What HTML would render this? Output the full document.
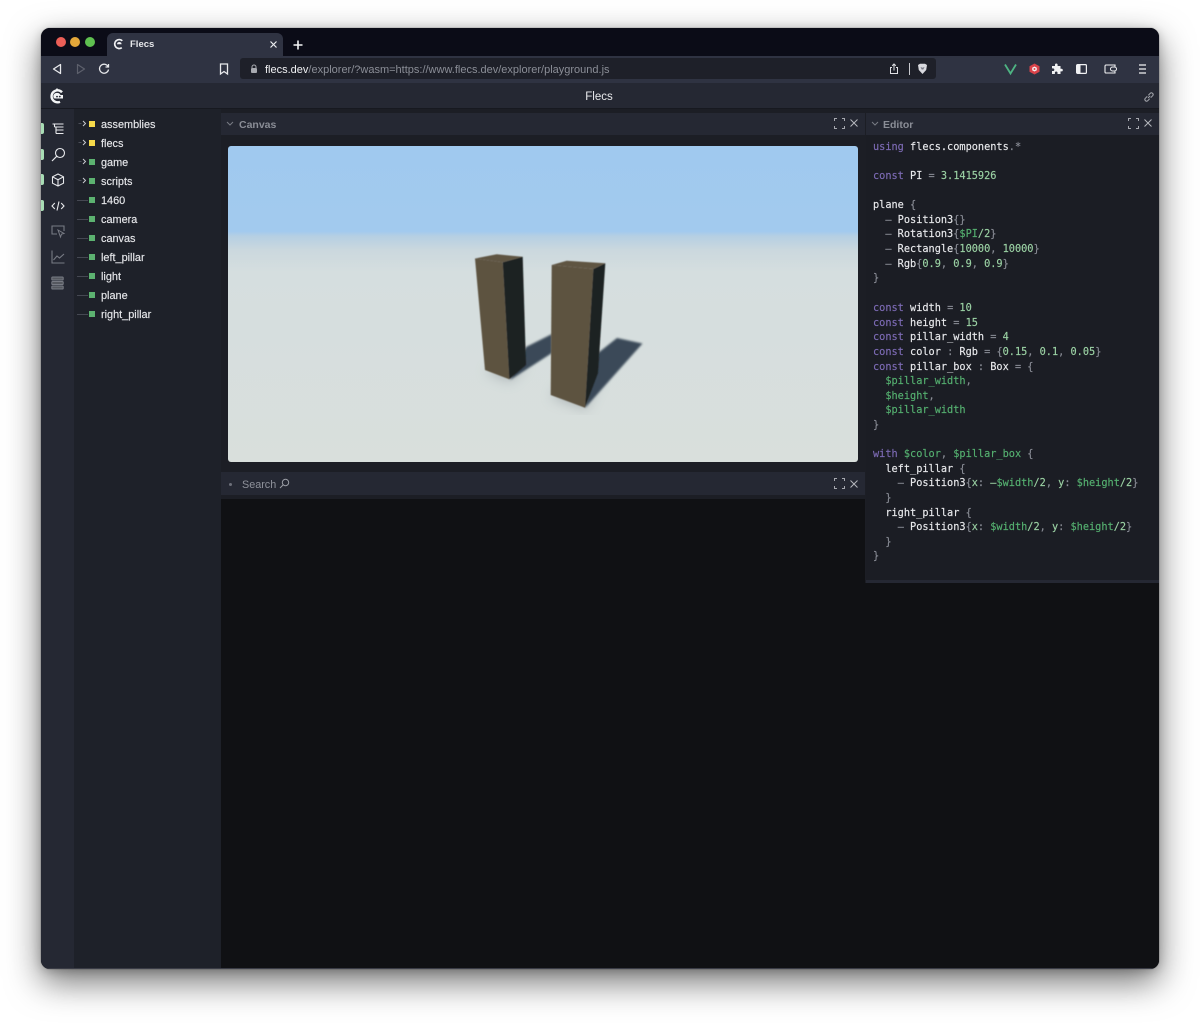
<!DOCTYPE html>
<html><head><meta charset="utf-8"><title>Flecs</title>
<style>
*{box-sizing:border-box}
html,body{margin:0;padding:0;width:1200px;height:1024px;background:#fff;overflow:hidden;font-family:"Liberation Sans",sans-serif}
#win{position:absolute;left:41px;top:28px;width:1118px;height:941px;border-radius:9px;overflow:hidden;background:#101114;box-shadow:0 0 1px rgba(0,0,0,.6),0 13px 34px rgba(0,0,0,.55),0 2px 10px rgba(0,0,0,.2)}
.a{position:absolute}
.t{position:absolute;white-space:pre;line-height:14px}
.tree{font-size:10.9px;color:#e6e7ea;left:60px;-webkit-text-stroke:.15px #e6e7ea}
.sq{position:absolute;left:48px;width:6px;height:6px;background:#5cb270}
.sq.y{background:#f5d94a}
.dash{position:absolute;left:36px;width:11px;height:1px;background:#454852}
.code{position:absolute;left:832px;font:10.25px/14px "DejaVu Sans Mono","Liberation Mono",monospace;color:#e8e9ec;white-space:pre;-webkit-text-stroke:.15px currentColor}
.k{color:#7d6bb5}.n{color:#9bd2a4}.v{color:#55b070}.p{color:#8a8d96}
.pip{position:absolute;left:0;width:3px;height:11px;background:#a8dcb4;border-radius:0 2px 2px 0}
svg{position:absolute;overflow:visible}
</style></head><body>
<div id="win">
<!-- tab bar -->
<div class="a" style="left:0;top:0;width:1118px;height:28px;background:#0b0c17"></div>
<div class="a" style="left:15px;top:9px;width:10px;height:10px;border-radius:50%;background:#ec5f57"></div>
<div class="a" style="left:29px;top:9px;width:10px;height:10px;border-radius:50%;background:#e4a83a"></div>
<div class="a" style="left:44px;top:9px;width:10px;height:10px;border-radius:50%;background:#5fc150"></div>
<div class="a" style="left:66px;top:5px;width:176px;height:23px;background:#2f3342;border-radius:6px 6px 0 0"></div>
<svg style="left:72px;top:10px" width="12" height="12" viewBox="0 0 12 12"><path d="M9.300 2.800A4.500 4.500 0 1 0 8.800 9.700" fill="none" stroke="#f1f2f4" stroke-width="1.700"/><path d="M4 6.300a2.300 2.300 0 0 1 4.600 0z" fill="#f1f2f4"/></svg>
<div class="t" style="left:89px;top:10px;font-size:9.500px;font-weight:bold;color:#e6e7ea">Flecs</div>
<svg style="left:229px;top:13px" width="7" height="7" viewBox="0 0 7 7"><path d="M.5.5l6 6M6.500.5l-6 6" stroke="#eceef0" stroke-width="1.200"/></svg>
<svg style="left:252px;top:12px" width="10" height="10" viewBox="0 0 10 10"><path d="M5 .5v9M.5 5h9" stroke="#f4f5f6" stroke-width="1.600"/></svg>
<!-- toolbar -->
<div class="a" style="left:0;top:28px;width:1118px;height:27px;background:#2f3342"></div>
<svg style="left:11px;top:35px" width="10" height="12" viewBox="0 0 10 12"><path d="M8.500 1.500v9L1.500 6z" fill="none" stroke="#e8e9ec" stroke-width="1.300" stroke-linejoin="round"/></svg>
<svg style="left:35px;top:35px" width="10" height="12" viewBox="0 0 10 12"><path d="M1.500 1.500v9L8.500 6z" fill="none" stroke="#5d606c" stroke-width="1.200" stroke-linejoin="round"/></svg>
<svg style="left:57px;top:35px" width="12" height="12" viewBox="0 0 12 12"><path d="M10 3.500A4.500 4.500 0 1 0 10.500 6.500M10.500 1v3H7.500" fill="none" stroke="#e8e9ec" stroke-width="1.300"/></svg>
<svg style="left:178px;top:35px" width="10" height="12" viewBox="0 0 10 12"><path d="M1.500 1h7v10L5 8.500 1.500 11z" fill="none" stroke="#e8e9ec" stroke-width="1.300"/></svg>
<div class="a" style="left:199px;top:30px;width:696px;height:21px;background:#1e2029;border-radius:3px"></div>
<svg style="left:209px;top:36px" width="8" height="10" viewBox="0 0 8 10"><path d="M2 4V3a2 2 0 0 1 4 0v1" fill="none" stroke="#a8aab0" stroke-width="1"/><rect x="1" y="4" width="6" height="5" rx="1" fill="#a8aab0"/></svg>
<div class="t" style="left:224px;top:35px;font-size:11px;color:#8b8e97"><span style="color:#f0f1f3">flecs.dev</span>/explorer/?wasm=https://www.flecs.dev/explorer/playground.js</div>
<svg style="left:848px;top:35px" width="10" height="12" viewBox="0 0 10 12"><path d="M3 4.500H1.500v6h7v-6H7M5 7.500V1M3.200 2.700 5 1l1.800 1.700" fill="none" stroke="#dfe0e4" stroke-width="1"/></svg>
<div class="a" style="left:868px;top:35px;width:1px;height:12px;background:#c8c9ce"></div>
<svg style="left:876px;top:35px" width="11" height="12" viewBox="0 0 11 12"><path d="M1 2 3 .8h5L10 2l-.8 5L5.500 11 1.800 7z" fill="#d8d9de"/><path d="M3.500 4l2 .8L7.500 4 6.300 6.500H4.700z" fill="#777985"/></svg>
<svg style="left:963px;top:35px" width="13" height="12" viewBox="0 0 13 12"><path d="M1 1.500 6.500 10.500 12 1.500" fill="none" stroke="#4eb483" stroke-width="1.800"/></svg>
<svg style="left:988px;top:35px" width="11" height="12" viewBox="0 0 11 12"><path d="M5.500.5 10.500 3.200v5.600L5.500 11.500.5 8.800V3.200z" fill="#d9434a"/><path d="M5.500 3.500 7.800 4.800v2.400L5.500 8.500 3.200 7.200V4.800z" fill="#f4f4f4"/><circle cx="5.500" cy="6" r="1" fill="#d9434a"/></svg>
<svg style="left:1010px;top:35px" width="12" height="12" viewBox="0 0 12 12"><path d="M1 3h3V1.800a1.300 1.300 0 0 1 2.600 0V3H9.500v2.800h1a1.300 1.300 0 0 1 0 2.600h-1V11H6.500V9.800a1.300 1.300 0 0 0-2.600 0V11H1V8h1a1.300 1.300 0 0 0 0-2.600H1z" fill="#f0f1f3"/></svg>
<svg style="left:1035px;top:36px" width="11" height="10" viewBox="0 0 11 10"><rect x=".6" y=".6" width="9.800" height="8.800" rx="1" fill="none" stroke="#f0f1f3" stroke-width="1.200"/><rect x="1" y="1" width="3.500" height="8" fill="#f0f1f3"/></svg>
<svg style="left:1063px;top:36px" width="13" height="10" viewBox="0 0 13 10"><path d="M11 2.500V1H2Q1 1 1 2.500V8q0 1 1 1h9V7.500" fill="none" stroke="#f0f1f3" stroke-width="1.100"/><rect x="6.500" y="3" width="6" height="4" rx="2" fill="none" stroke="#f0f1f3"/></svg>
<svg style="left:1097px;top:36px" width="9" height="10" viewBox="0 0 9 10"><path d="M1 1h7M1 5h7M1 9h7" stroke="#f0f1f3" stroke-width="1.300"/></svg>
<!-- app bar -->
<div class="a" style="left:0;top:55px;width:1118px;height:26px;background:#252833;border-bottom:1px solid #171920"></div>
<svg style="left:8px;top:59px" width="16" height="18" viewBox="0 0 16 18"><path d="M13 5.300A6 6 0 1 0 11 14.800" fill="none" stroke="#f3f4f5" stroke-width="2.400"/><path d="M6 3.500 8 1l2 2.500z" fill="#f3f4f5"/><path d="M4.500 10a3.500 3 0 0 1 7-2h2.500v3.500H6q-1.500 0-1.500-1.500z" fill="#f3f4f5"/><circle cx="8" cy="9.600" r=".9" fill="#252833"/><circle cx="10.800" cy="9.600" r=".9" fill="#252833"/></svg>
<div class="t" style="left:-1px;width:1118px;text-align:center;top:62px;font-size:11.500px;color:#e8e9ec">Flecs</div>
<svg style="left:1102px;top:63px" width="12" height="12" viewBox="0 0 12 12"><path d="M5 7 7.200 4.800M4.300 5.300 2.300 7.300a1.700 1.700 0 0 0 2.400 2.400l2-2M7.700 6.700l2-2a1.700 1.700 0 0 0-2.400-2.400l-2 2" fill="none" stroke="#a5a7ae" stroke-width="1"/></svg>
<div class="a" style="left:0;top:81px;width:1118px;height:860px;background:#1c1e25"></div>
<!-- nav rail -->
<div class="a" style="left:0;top:81px;width:33px;height:860px;background:#252833"></div>
<div class="pip" style="top:95px"></div><div class="pip" style="top:121px"></div><div class="pip" style="top:146px"></div><div class="pip" style="top:172px"></div>
<svg style="left:10px;top:95px" width="14" height="12" viewBox="0 0 14 12"><path d="M1.500 1h11M3.500 4h9M5 7h7.500M5 10.500h7.500M3.500 1v3M5 4v6.500" fill="none" stroke="#e8e9ec" stroke-width="1.100"/></svg>
<svg style="left:10px;top:119px" width="15" height="15" viewBox="0 0 15 15"><circle cx="9" cy="6" r="4.500" fill="none" stroke="#e8e9ec" stroke-width="1.100"/><path d="M5.800 9.200 1 14" stroke="#e8e9ec" stroke-width="1.200"/></svg>
<svg style="left:10px;top:145px" width="14" height="14" viewBox="0 0 14 14"><path d="M7 1 12.500 3.800v6.400L7 13 1.500 10.200V3.800zM1.500 3.800 7 6.700l5.500-2.900M7 6.700V13" fill="none" stroke="#e8e9ec" stroke-width="1.100"/></svg>
<svg style="left:10px;top:172px" width="14" height="12" viewBox="0 0 14 12"><path d="M3.800 3 1 6l2.800 3M10.200 3 13 6l-2.800 3M8 1.500 6 10.500" fill="none" stroke="#e8e9ec" stroke-width="1.100"/></svg>
<svg style="left:10px;top:197px" width="14" height="13" viewBox="0 0 14 13"><path d="M6 9H1V1h12v5" fill="none" stroke="#787b84" stroke-width="1.100"/><path d="M7 5l6 3.500-2.500.7L9.500 12z" fill="none" stroke="#787b84"/></svg>
<svg style="left:10px;top:222px" width="14" height="14" viewBox="0 0 14 14"><path d="M1 .5V13h12.500M2.500 10 6 6l2.500 2L13 4" fill="none" stroke="#787b84" stroke-width="1.100"/></svg>
<svg style="left:10px;top:248px" width="13" height="14" viewBox="0 0 13 14"><rect x=".8" y="1" width="11.400" height="3" rx=".8" fill="#55585f" stroke="#787b84"/><rect x=".8" y="5.500" width="11.400" height="3" rx=".8" fill="#55585f" stroke="#787b84"/><rect x=".8" y="10" width="11.400" height="3" rx=".8" fill="#55585f" stroke="#787b84"/></svg>
<!-- tree -->
<div class="a" style="left:33px;top:81px;width:147px;height:860px;background:#1e2129"></div>
<svg style="left:37px;top:92px" width="9" height="7" viewBox="0 0 9 7"><path d="M5 1l2.500 2.500L5 6" fill="none" stroke="#c9cad0"/><path d="M.5 3.500h3" stroke="#4a4d57"/></svg>
<svg style="left:37px;top:111px" width="9" height="7" viewBox="0 0 9 7"><path d="M5 1l2.500 2.500L5 6" fill="none" stroke="#c9cad0"/><path d="M.5 3.500h3" stroke="#4a4d57"/></svg>
<svg style="left:37px;top:130px" width="9" height="7" viewBox="0 0 9 7"><path d="M5 1l2.500 2.500L5 6" fill="none" stroke="#c9cad0"/><path d="M.5 3.500h3" stroke="#4a4d57"/></svg>
<svg style="left:37px;top:149px" width="9" height="7" viewBox="0 0 9 7"><path d="M5 1l2.500 2.500L5 6" fill="none" stroke="#c9cad0"/><path d="M.5 3.500h3" stroke="#4a4d57"/></svg>
<div class="sq y" style="top:93px"></div><div class="sq y" style="top:112px"></div><div class="sq" style="top:131px"></div><div class="sq" style="top:150px"></div>
<div class="sq" style="top:169px"></div><div class="sq" style="top:188px"></div><div class="sq" style="top:207px"></div><div class="sq" style="top:226px"></div><div class="sq" style="top:245px"></div><div class="sq" style="top:264px"></div><div class="sq" style="top:283px"></div>
<div class="dash" style="top:172px"></div><div class="dash" style="top:191px"></div><div class="dash" style="top:210px"></div><div class="dash" style="top:229px"></div><div class="dash" style="top:248px"></div><div class="dash" style="top:267px"></div><div class="dash" style="top:286px"></div>
<div class="t tree" style="top:89px;margin-top:1px">assemblies</div>
<div class="t tree" style="top:108px;margin-top:1px">flecs</div>
<div class="t tree" style="top:127px;margin-top:1px">game</div>
<div class="t tree" style="top:146px;margin-top:1px">scripts</div>
<div class="t tree" style="top:165px;margin-top:1px">1460</div>
<div class="t tree" style="top:184px;margin-top:1px">camera</div>
<div class="t tree" style="top:203px;margin-top:1px">canvas</div>
<div class="t tree" style="top:222px;margin-top:1px">left_pillar</div>
<div class="t tree" style="top:241px;margin-top:1px">light</div>
<div class="t tree" style="top:260px;margin-top:1px">plane</div>
<div class="t tree" style="top:279px;margin-top:1px">right_pillar</div>
<!-- canvas panel -->
<div class="a" style="left:180px;top:85px;width:644px;height:22px;background:#252833"></div>
<svg style="left:185px;top:93px" width="8" height="6" viewBox="0 0 8 6"><path d="M1 1l3 3 3-3" fill="none" stroke="#787b84"/></svg>
<div class="t" style="left:198px;top:90px;font-size:10.500px;font-weight:bold;color:#8a8d96">Canvas</div>
<svg style="left:793px;top:90px" width="11" height="11" viewBox="0 0 11 11"><path d="M.5 3V.5H3M8 .5h2.500V3M10.500 8v2.500H8M3 10.500H.5V8" fill="none" stroke="#a5a7ae"/></svg>
<svg style="left:809px;top:91px" width="8" height="8" viewBox="0 0 8 8"><path d="M.5.5l7 7M7.500.5l-7 7" stroke="#b5b7bd"/></svg>
<svg style="left:187px;top:118px" width="630" height="316" viewBox="0 0 630 316">
<defs>
<linearGradient id="g" x1="0" y1="0" x2="0" y2="1"><stop offset="0" stop-color="#a0c9ef"/><stop offset=".27" stop-color="#a2caee"/><stop offset=".285" stop-color="#b5cfe3"/><stop offset=".33" stop-color="#cbd8de"/><stop offset=".4" stop-color="#d5dedf"/><stop offset="1" stop-color="#d9dfdc"/></linearGradient>
<filter id="b"><feGaussianBlur stdDeviation="1"/></filter>
<filter id="b1"><feGaussianBlur stdDeviation=".4"/></filter>
<filter id="b2"><feGaussianBlur stdDeviation="6"/></filter>
<clipPath id="c"><rect width="630" height="316" rx="3"/></clipPath>
</defs>
<g clip-path="url(#c)">
<rect width="630" height="316" fill="url(#g)"/>
<g transform="translate(-228 -146)">
<path d="M485 372 510 382 526 366 505 360zM551 397 586 410 600 378 575 370z" fill="#8a9398" opacity=".5" filter="url(#b2)"/>
<path d="M526 347 552 334V353L510 380z" fill="#3a4a59" filter="url(#b)"/>
<path d="M598 353 617 338 642.500 343.500 585 408z" fill="#3a4a59" filter="url(#b)"/>
<g filter="url(#b1)">
<path d="M475 258.500 502.700 262.300 509.300 379.300 485 370z" fill="#5d5241"/>
<path d="M502.700 262.300 522.700 256.700 526 365 509.300 379.300z" fill="#1d2021"/>
<path d="M475 258.500 496.700 254.300 522.700 256.700 502.700 262.300z" fill="#5f5443"/>
<path d="M551.700 265 593.300 269 585 407.700 550.700 395z" fill="#5d5241"/>
<path d="M593.300 269 605.300 263.300 598 373 585 407.700z" fill="#1d2021"/>
<path d="M551.700 265 566.700 260.700 605.300 263.300 593.300 269z" fill="#5f5443"/>
</g>
</g></g></svg>
<!-- search panel -->
<div class="a" style="left:180px;top:444px;width:644px;height:25px;background:#252833;border-bottom:2px solid #1c1e25"></div>
<div class="a" style="left:188px;top:455px;width:3px;height:3px;border-radius:50%;background:#6d707a"></div>
<div class="t" style="left:201px;top:450px;font-size:10.800px;color:#8f929b">Search</div>
<svg style="left:238px;top:450px" width="11" height="11" viewBox="0 0 11 11"><circle cx="6.500" cy="4.500" r="3.200" fill="none" stroke="#9b9ea6"/><path d="M4 7 1 10" stroke="#9b9ea6"/></svg>
<svg style="left:793px;top:450px" width="11" height="11" viewBox="0 0 11 11"><path d="M.5 3V.5H3M8 .5h2.500V3M10.500 8v2.500H8M3 10.500H.5V8" fill="none" stroke="#a5a7ae"/></svg>
<svg style="left:809px;top:452px" width="8" height="8" viewBox="0 0 8 8"><path d="M.5.5l7 7M7.500.5l-7 7" stroke="#b5b7bd"/></svg>
<div class="a" style="left:180px;top:471px;width:644px;height:470px;background:#101114"></div>
<!-- editor -->
<div class="a" style="left:824px;top:555px;width:294px;height:386px;background:#101114"></div>
<div class="a" style="left:825px;top:85px;width:293px;height:22px;background:#252833"></div>
<div class="a" style="left:825px;top:107px;width:293px;height:445px;background:#1b1d24"></div>
<div class="a" style="left:825px;top:552px;width:293px;height:3px;background:#252833"></div>
<svg style="left:830px;top:93px" width="8" height="6" viewBox="0 0 8 6"><path d="M1 1l3 3 3-3" fill="none" stroke="#787b84"/></svg>
<div class="t" style="left:842px;top:90px;font-size:10.500px;font-weight:bold;color:#8a8d96">Editor</div>
<svg style="left:1087px;top:90px" width="11" height="11" viewBox="0 0 11 11"><path d="M.5 3V.5H3M8 .5h2.500V3M10.500 8v2.500H8M3 10.500H.5V8" fill="none" stroke="#a5a7ae"/></svg>
<svg style="left:1103px;top:91px" width="8" height="8" viewBox="0 0 8 8"><path d="M.5.5l7 7M7.500.5l-7 7" stroke="#b5b7bd"/></svg>
<div class="code" style="top:112px"><span class="k">using</span> flecs.components<span class="p">.*</span></div>
<div class="code" style="top:141px"><span class="k">const</span> PI <span class="p">=</span> <span class="n">3.1415926</span></div>
<div class="code" style="top:170px">plane <span class="p">{</span></div>
<div class="code" style="top:185px">  <span class="p">–</span> Position3<span class="p">{}</span></div>
<div class="code" style="top:199px">  <span class="p">–</span> Rotation3<span class="p">{</span><span class="v">$PI</span><span class="n">/2</span><span class="p">}</span></div>
<div class="code" style="top:214px">  <span class="p">–</span> Rectangle<span class="p">{</span><span class="n">10000</span><span class="p">,</span> <span class="n">10000</span><span class="p">}</span></div>
<div class="code" style="top:229px">  <span class="p">–</span> Rgb<span class="p">{</span><span class="n">0.9</span><span class="p">,</span> <span class="n">0.9</span><span class="p">,</span> <span class="n">0.9</span><span class="p">}</span></div>
<div class="code" style="top:243px"><span class="p">}</span></div>
<div class="code" style="top:273px"><span class="k">const</span> width <span class="p">=</span> <span class="n">10</span></div>
<div class="code" style="top:288px"><span class="k">const</span> height <span class="p">=</span> <span class="n">15</span></div>
<div class="code" style="top:302px"><span class="k">const</span> pillar_width <span class="p">=</span> <span class="n">4</span></div>
<div class="code" style="top:317px"><span class="k">const</span> color <span class="p">:</span> Rgb <span class="p">=</span> <span class="p">{</span><span class="n">0.15</span><span class="p">,</span> <span class="n">0.1</span><span class="p">,</span> <span class="n">0.05</span><span class="p">}</span></div>
<div class="code" style="top:332px"><span class="k">const</span> pillar_box <span class="p">:</span> Box <span class="p">=</span> <span class="p">{</span></div>
<div class="code" style="top:346px">  <span class="v">$pillar_width</span><span class="p">,</span></div>
<div class="code" style="top:361px">  <span class="v">$height</span><span class="p">,</span></div>
<div class="code" style="top:375px">  <span class="v">$pillar_width</span></div>
<div class="code" style="top:390px"><span class="p">}</span></div>
<div class="code" style="top:419px"><span class="k">with</span> <span class="v">$color</span><span class="p">,</span> <span class="v">$pillar_box</span> <span class="p">{</span></div>
<div class="code" style="top:434px">  left_pillar <span class="p">{</span></div>
<div class="code" style="top:448px">    <span class="p">–</span> Position3<span class="p">{</span><span class="n">x</span><span class="p">:</span> <span class="n">–</span><span class="v">$width</span><span class="n">/2</span><span class="p">,</span> <span class="n">y</span><span class="p">:</span> <span class="v">$height</span><span class="n">/2</span><span class="p">}</span></div>
<div class="code" style="top:463px">  <span class="p">}</span></div>
<div class="code" style="top:478px">  right_pillar <span class="p">{</span></div>
<div class="code" style="top:492px">    <span class="p">–</span> Position3<span class="p">{</span><span class="n">x</span><span class="p">:</span> <span class="v">$width</span><span class="n">/2</span><span class="p">,</span> <span class="n">y</span><span class="p">:</span> <span class="v">$height</span><span class="n">/2</span><span class="p">}</span></div>
<div class="code" style="top:507px">  <span class="p">}</span></div>
<div class="code" style="top:521px"><span class="p">}</span></div>
<div class="a" style="left:0;top:940px;width:1118px;height:1px;background:#3a3c46"></div>
</div>
</body></html>
